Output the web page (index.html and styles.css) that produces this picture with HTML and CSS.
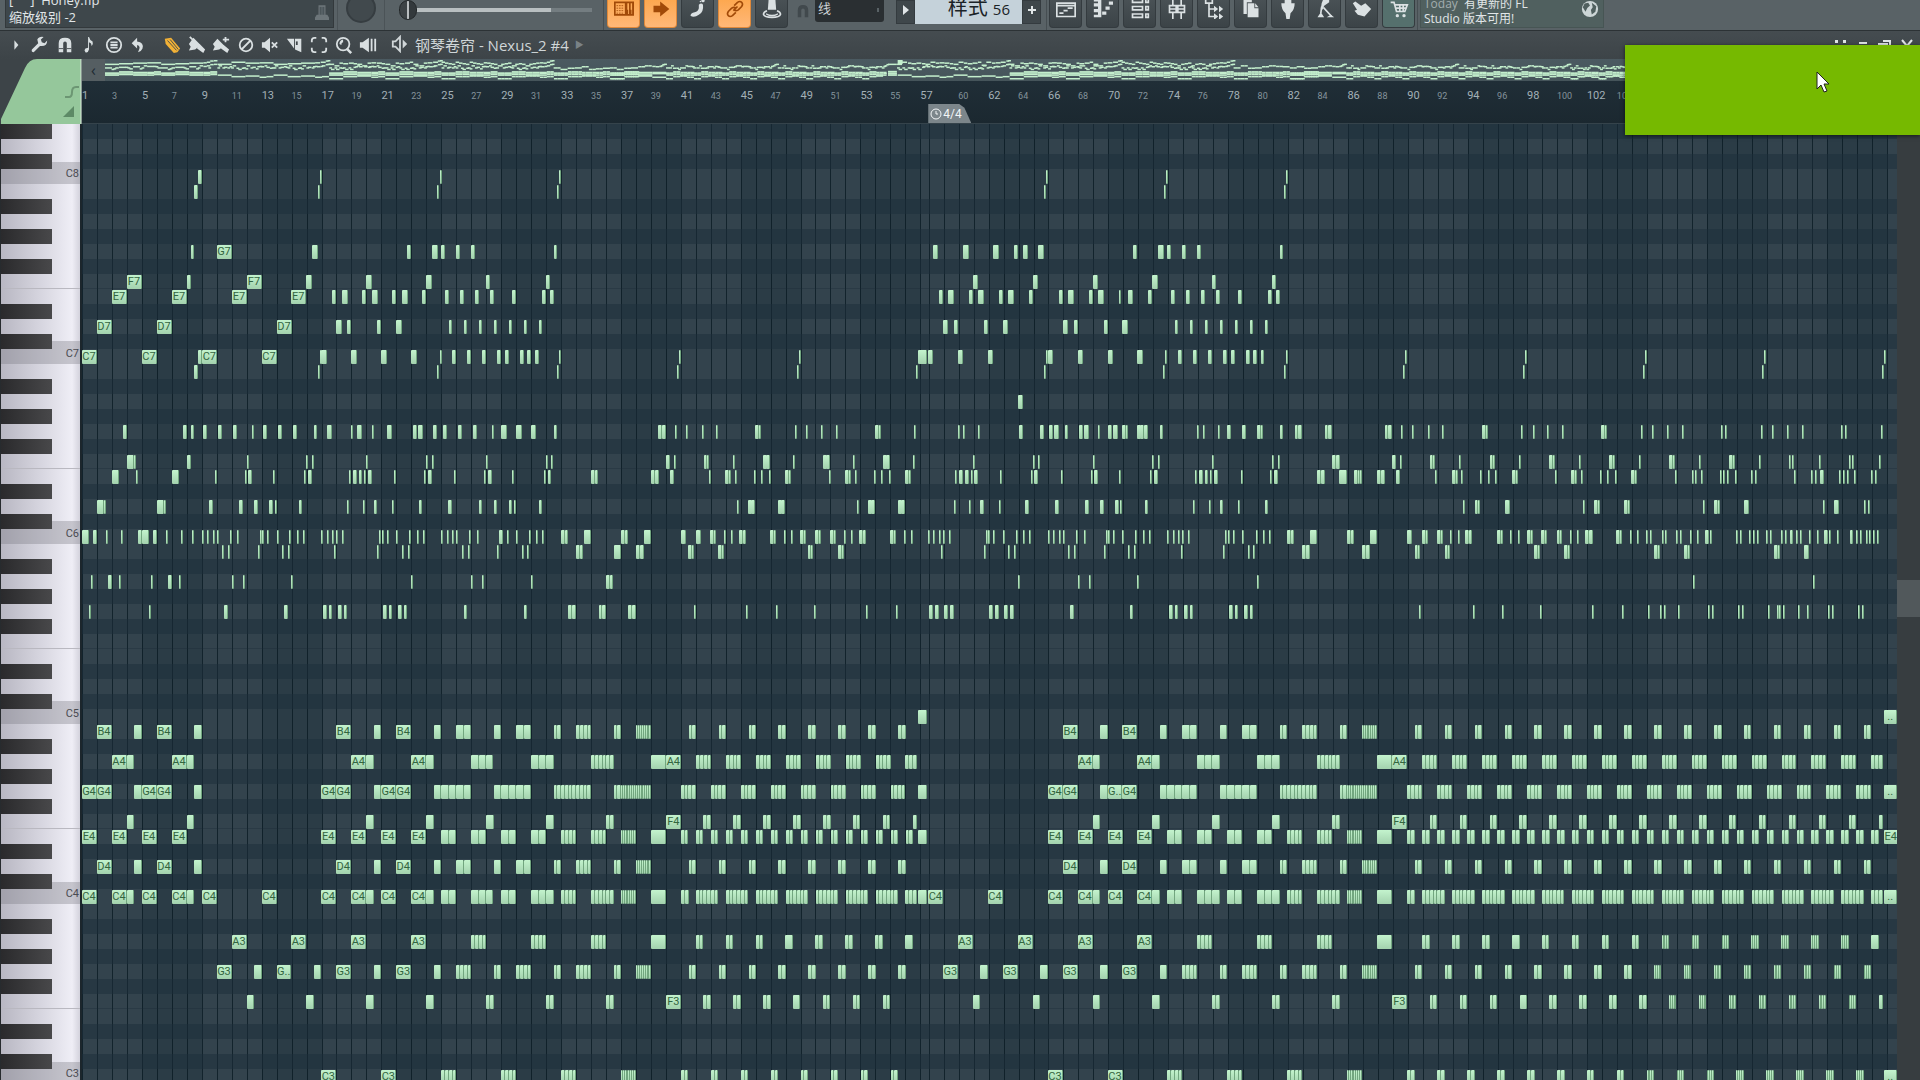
FILE: index.html
```html
<!DOCTYPE html>
<html lang="zh-CN">
<head>
    <meta charset="UTF-8">
    <meta content="width=device-width, initial-scale=1.0" name="viewport">
    <title>钢琴卷帘 - Nexus_2 #4</title>
    <link rel="stylesheet" href="styles.css">
</head>
<body>
<header class="topbar">
    <div class="hint">
        <div class="hint-text">
            <div class="hint-file">[ &nbsp; &nbsp; ] &nbsp;Honey.flp</div>
            <div>缩放级别 -2</div>
        </div>
        <svg class="hint-icon" viewBox="0 0 16 20"><path d="M4 1h8v11h2l2 3v3H0v-3l2-3h2z"/><path d="M6 3v9M8 3v9M10 3v9" stroke="#3d474b"/></svg>
    </div>
    <div class="knob-box"><div class="knob"></div></div>
    <input aria-label="Main volume" class="volume" max="100" min="0" type="range" value="0">
    <div class="group modes">
        <button aria-label="Typing keyboard" class="tile on" type="button"><svg viewBox="0 0 24 24"><path class="line" d="M1 4h22v15H1z"/><path d="M3 8h9M3 11h9M3 14h9M3 17h9" stroke="currentColor" stroke-dasharray="2 1"/><path d="M13 4h3v9h1v6h-4zM18 4h2v9h1v6h-3v-6zM22 4h1v15h-1z"/></svg></button>
        <button aria-label="Auto scroll" class="tile on" type="button"><svg viewBox="0 0 24 24"><path d="M3 8h8V3l11 9-11 9v-5H3z"/></svg></button>
        <button aria-label="Step edit" class="tile" type="button"><svg viewBox="0 0 24 24"><path d="M3 20q0-3 5-4 4-1 5-5V7q3-3 5 0 1 9-5 12-6 4-10 1z"/><circle cx="15" cy="3" r="1"/><circle cx="18" cy="2" r="2"/></svg></button>
        <button aria-label="Link notes" class="tile on" type="button"><svg viewBox="0 0 24 24"><path class="line" d="M10 14l5-5M11 8l4-4q3-2 5 0t0 5l-4 4q-3 2-5 0M13 16l-4 4q-3 2-5 0t0-5l4-4q3-2 5 0"/></svg></button>
        <button aria-label="Metronome" class="tile" type="button"><svg viewBox="0 0 24 24"><path d="M8 0h8l1 13H7z"/><path class="line" d="M6 14q-5 2-4 5t10 3 10-3-4-5"/><path d="M5 17q7 4 14 0v2q-7 4-14 0z"/></svg></button>
    </div>
    <svg class="snap-icon" viewBox="0 0 16 16"><path d="M2 15V7q0-6 6-6t6 6v8h-4V7q0-2-2-2T6 7v8z"/></svg>
    <select aria-label="Snap" class="snap"><option>线</option></select>
    <div class="pattern">
        <button aria-label="Pattern menu" class="pattern-side" type="button"><svg viewBox="0 0 8 10"><path d="M1 0l6 5-6 5z"/></svg></button>
        <button class="pattern-name" type="button">样式 <span>56</span></button>
        <button aria-label="New pattern" class="pattern-side" type="button"><svg viewBox="0 0 8 10"><path d="M3 1h2v3h3v2H5v3H3V6H0V4h3z"/></svg></button>
    </div>
    <div class="group windows">
        <button aria-label="Playlist" class="tile" type="button"><svg viewBox="0 0 24 24"><path class="line" d="M1 5h22v16H1zM1 8h22M4 17h5M9 14h5M14 11h6"/></svg></button>
        <button aria-label="Piano roll" class="tile" type="button"><svg viewBox="0 0 24 24"><path d="M1 0h9v22H1v-3h5v-3H1v-4h5V9H1V5h5V3H1zM11 15h5v4h-5zM15 9h5v4h-5zM19 3h5v4h-5z"/></svg></button>
        <button aria-label="Channel rack" class="tile" type="button"><svg viewBox="0 0 24 24"><path class="line" d="M3 0h12v4H3zM3 9h12v4H3zM3 18h12v4H3zM19 0h3v4h-3zM19 9h3v4h-3zM19 18h3v4h-3z"/></svg></button>
        <button aria-label="Mixer" class="tile" type="button"><svg viewBox="0 0 24 24"><path class="line" d="M7 0v8M7 16v8M17 0v8M17 16v8M3 8h8v8H3zM13 8h8v8h-8zM3 12h8M13 12h8"/></svg></button>
        <button aria-label="Browser" class="tile" type="button"><svg viewBox="0 0 24 24"><path class="line" d="M2 0h8v5H2zM6 5v16h8M6 12h8"/><path d="M12 8l5 4-5 4zM18 8l5 4-5 4zM12 17l5 4-5 4zM18 17l5 4-5 4z"/></svg></button>
        <button aria-label="Project picker" class="tile" type="button"><svg viewBox="0 0 24 24"><path d="M3 0h10v4H7v14H3z"/><path d="M8 5h8v6h5v11H8z"/><path d="M17 5l4 5h-4z"/></svg></button>
        <button aria-label="Plugins" class="tile" type="button"><svg viewBox="0 0 24 24"><path d="M8 0h8v5h4q0 8-5 12l-1 7h-4l-1-7Q4 13 4 5h4z"/></svg></button>
        <button aria-label="Tempo tapper" class="tile" type="button"><svg viewBox="0 0 24 24"><path d="M10 0h7v4l-6 4-2 5-2-1 1-7z"/><path class="line" d="M8 9l-1 8M10 10l10 11"/><path d="M3 22l4-6 4 6zM14 22l5-3 4 3z"/></svg></button>
        <button aria-label="Touch" class="tile" type="button"><svg viewBox="0 0 24 24"><path d="M1 5l3-2 7 5 5-3 7 7-8 9-8-2-4-5 3-1z"/></svg></button>
        <button aria-label="Shop" class="tile shop" type="button"><svg viewBox="0 0 24 24"><path class="line" d="M2 4h4l3 11h10l3-8H7M8 11h12M13 7v8M17 7v8"/><circle cx="10" cy="20" r="2"/><circle cx="18" cy="20" r="2"/></svg></button>
    </div>
    <div class="news">
        <div class="news-text"><span class="muted">Today</span> &nbsp;有更新的 FL<br>Studio 版本可用!</div>
        <svg class="globe" viewBox="0 0 20 20"><circle cx="10" cy="10" r="9"/><path d="M4 4l4-1 2 3-3 3-2 4-3-5zM12 3l5 4-1 6-4 3-1-5 2-3z"/></svg>
    </div>
</header>

<div class="toolbar">
    <button aria-label="Menu" class="tool narrow" type="button"><svg viewBox="0 0 20 20"><path d="M8 4l5 6-5 6z"/></svg></button>
    <div class="tools main-tools">
        <button aria-label="Options" class="tool" type="button"><svg viewBox="0 0 20 20"><path d="M18 5l-3 3-3-1-1-3 3-3q-5-1-7 3l1 4-7 7q-1 3 2 3l7-7q8 1 8-6z"/></svg></button>
        <button aria-label="Snap" class="tool" type="button"><svg viewBox="0 0 20 20"><path d="M3 18V8q0-6 7-6t7 6v10h-5V8q0-2-2-2T8 8v10z"/><path d="M3 14h5M12 14h5" stroke="#41484c"/></svg></button>
        <button aria-label="Stamp" class="tool" type="button"><svg viewBox="0 0 20 20"><path d="M10 1q1 4 4 5 1 3-1 5 0-3-3-4v8q-1 4-4 3-2-2 0-4l3-1V1z"/></svg></button>
        <button aria-label="View" class="tool" type="button"><svg viewBox="0 0 20 20"><circle class="line" cx="10" cy="10" r="8"/><path class="line" d="M6 7h8M6 10h8M6 13h8"/></svg></button>
        <button aria-label="Undo" class="tool" type="button"><svg viewBox="0 0 20 20"><path d="M9 2v4q8 1 6 8-1 3-5 4 4-7-1-8v4L3 8z"/></svg></button>
    </div>
    <div class="tools edit-tools">
        <button aria-label="Draw" class="tool active" type="button"><svg viewBox="0 0 20 20"><path d="M2 3l7-1 10 12-3 4-4 1L3 9z"/><path d="M5 5l10 11M8 4l9 11" stroke="#41484c"/></svg></button>
        <button aria-label="Paint" class="tool" type="button"><svg viewBox="0 0 20 20"><path d="M6 2l8 8-6 5-7 1 2-4-2-3zM13 9l6 6-2 4-7-5z"/><path d="M2 1l5 5" class="line"/></svg></button>
        <button aria-label="Paint sequence" class="tool" type="button"><svg viewBox="0 0 20 20"><path d="M6 3l8 8-6 4-7 1 2-4-2-3zM13 10l6 5-2 4-7-5z"/><path class="line" d="M12 4h7M15 1v6"/></svg></button>
        <button aria-label="Delete" class="tool" type="button"><svg viewBox="0 0 20 20"><circle class="line" cx="10" cy="10" r="7"/><path class="line" d="M15 5L5 15"/></svg></button>
        <button aria-label="Mute" class="tool" type="button"><svg viewBox="0 0 20 20"><path d="M1 7h3l6-5v16l-6-5H1z"/><path class="line" d="M12 7l6 6M18 7l-6 6"/></svg></button>
        <button aria-label="Slice" class="tool" type="button"><svg viewBox="0 0 20 20"><path d="M1 3h8v11zM10 3h7v15l-7-3z"/><path d="M12 6v4" stroke="#41484c" stroke-width="2"/></svg></button>
        <button aria-label="Select" class="tool" type="button"><svg viewBox="0 0 20 20"><path class="line" d="M2 7V5q0-3 3-3h2M13 2h2q3 0 3 3v2M18 13v2q0 3-3 3h-2M7 18H5q-3 0-3-3v-2"/></svg></button>
        <button aria-label="Zoom" class="tool" type="button"><svg viewBox="0 0 20 20"><circle class="line" cx="9" cy="9" r="7"/><path d="M14 13l5 5-2 2-5-5zM5 9q0-4 4-5v3q-2 0-2 3z"/></svg></button>
        <button aria-label="Playback" class="tool" type="button"><svg viewBox="0 0 20 20"><path d="M1 7h3l7-5v16l-7-5H1zM13 3h2v14h-2zM17 3h2v14h-2z"/></svg></button>
    </div>
    <button class="title" type="button">
        <svg viewBox="0 0 20 20"><path class="line" d="M2 7h3l5-5v16l-5-5H2z"/><path d="M13 5l5 5-5 5z"/></svg>
        <span>钢琴卷帘 - Nexus_2 #4</span>
        <i>&#9654;</i>
    </button>
    <div class="window-buttons">
        <button aria-label="Detach" class="win" type="button"><svg viewBox="0 0 16 16"><path d="M2 3h3v3H2zM10 3h3v3h-3z"/></svg></button>
        <button aria-label="Minimise" class="win" type="button"><svg viewBox="0 0 16 16"><path d="M4 5h8v2H4z"/></svg></button>
        <button aria-label="Restore" class="win" type="button"><svg viewBox="0 0 16 16"><path class="line" d="M6 4h7v5M2 7h8v7H2z"/></svg></button>
        <button aria-label="Close" class="win" type="button"><svg viewBox="0 0 16 16"><path class="line" d="M3 3l10 12M13 3L3 15"/></svg></button>
    </div>
</div>

<main class="editor">
    <svg class="corner" viewBox="0 0 82 65" preserveAspectRatio="none">
        <path d="M1 65v-5L25 9q4-9 12-9h44v65z" fill="#95c79b"/>
        <path d="M65 38h4q3 0 3-5t4-5h3" fill="none" stroke="#6c9673" stroke-width="2"/>
        <path d="M63 58l11-11v11z" fill="#5d8a66"/>
        <path d="M81 0v65" stroke="#d8eadb"/>
    </svg>
    <div class="timeline">
        <div class="overview">
            <button aria-label="Scroll left" class="overview-left" type="button">&#8249;</button>
            <svg class="minimap" id="minimap" preserveAspectRatio="none" viewBox="0 0 5740 22"></svg>
        </div>
        <div class="ruler" id="ruler"></div>
    </div>
    <div class="keys" id="keys"></div>
    <div class="roll">
        <div class="bars" id="bars"></div>
        <div id="rows"></div>
    </div>
    <div class="scrollbar"><div class="scroll-thumb"></div></div>
</main>

<aside class="overlay">
    <svg class="pointer" viewBox="0 0 14 22"><path d="M1 1v17l4-4 3 7 3-1-3-7h5z" fill="#fff" stroke="#222"/></svg>
</aside>

<script src="roll.js"></script>
</body>
</html>
```
FILE: styles.css
```css
* {
    box-sizing: border-box;
}

body {
    margin: 0;
    height: 100vh;
    overflow: hidden;
    display: flex;
    flex-direction: column;
    background: #3d4448;
    color: #e1e6e8;
    font-family: "Open Sans", "Noto Sans CJK SC", sans-serif;
    font-size: 13px;
}

button,
select {
    font: inherit;
    color: inherit;
    border: 0;
    padding: 0;
    background: none;
}

svg {
    fill: currentColor;
}

svg .line {
    fill: none;
    stroke: currentColor;
    stroke-width: 2;
}

/* Top bar */
.topbar {
    display: flex;
    align-items: flex-start;
    flex: none;
    height: 31px;
    overflow: hidden;
    padding-left: 5px;
    background: #596266;
    border-bottom: 1px solid #2c3235;
}

.hint {
    display: flex;
    justify-content: space-between;
    align-items: flex-end;
    width: 329px;
    height: 28px;
    padding: 0 4px 1px 3px;
    background: #3e474b;
    border: 1px solid #33393c;
    border-top: 0;
}

.hint-text {
    line-height: 17px;
}

.hint-icon {
    width: 14px;
    height: 18px;
    margin-bottom: 4px;
    color: #6c7579;
}

.knob-box {
    width: 48px;
    height: 31px;
    margin-left: 3px;
    border-left: 1px solid #4b5357;
    border-right: 1px solid #4b5357;
}

.knob {
    width: 30px;
    height: 30px;
    margin: -7px auto 0;
    border-radius: 50%;
    background: #41494d;
    border: 2px solid #363d41;
}

.volume {
    appearance: none;
    width: 193px;
    height: 20px;
    margin: 0 0 0 14px;
    background: linear-gradient(90deg, #b9bfc1 79%, #747d81 79%) center / 100% 4px no-repeat;
}

.volume::-webkit-slider-thumb {
    appearance: none;
    width: 18px;
    height: 20px;
    border-radius: 9px;
    border: 1px solid #23282a;
    background: linear-gradient(90deg, #3d4346 44%, #b9bec0 44%, #b9bec0 54%, #33393c 54%);
}

.group {
    display: flex;
    gap: 4px;
    height: 31px;
    border-left: 1px solid #464e52;
}

.modes {
    margin-left: 11px;
    padding-left: 3px;
}

.tile {
    display: flex;
    justify-content: center;
    align-items: center;
    flex: none;
    width: 33px;
    height: 28px;
    padding-bottom: 9px;
    color: #dbe1e3;
    background: linear-gradient(#495155, #3b4347);
    border: 1px solid #343b3f;
    border-top: 0;
    border-radius: 0 0 4px 4px;
}

.tile svg {
    flex: none;
    width: 22px;
    height: 20px;
}

.tile.on {
    color: #a14a08;
    background: linear-gradient(#fda850, #ffb878);
    border-color: #e0893a;
}

.tile.shop {
    background: #55706d;
}

.snap-icon {
    width: 14px;
    height: 16px;
    margin: 3px 5px 0 8px;
    color: #41494d;
}

.snap {
    appearance: none;
    width: 69px;
    height: 22px;
    padding: 0 3px 6px;
    color: #cdd3d5;
    line-height: 16px;
    background: #2a2f32 linear-gradient(#596266, #596266) 62px 8px / 2px 4px no-repeat;
    border-radius: 0 0 3px 3px;
}

.pattern {
    display: flex;
    height: 24px;
    margin: 0 5px 0 12px;
}

.pattern-side {
    width: 19px;
    padding-bottom: 4px;
    background: #3f474b;
    border: 1px solid #343b3f;
}

.pattern-side svg {
    width: 8px;
    height: 10px;
}

.pattern-name {
    width: 107px;
    padding: 0 12px 8px 0;
    text-align: right;
    white-space: nowrap;
    font-size: 20px;
    line-height: 16px;
    color: #1b2327;
    background: #c5d2da;
}

.pattern-name span {
    font-size: 15px;
}

.windows {
    padding: 0 2px;
    border-right: 1px solid #464e52;
}

.news {
    display: flex;
    justify-content: space-between;
    width: 184px;
    height: 28px;
    margin-left: 2px;
    padding: 0 3px;
    background: #50605f;
    border: 1px solid #475554;
    border-top: 0;
    font-size: 12px;
}

.news-text {
    margin-top: -4px;
    line-height: 15px;
}

.muted {
    color: #a3adae;
}

.globe {
    width: 20px;
    height: 18px;
    fill: #50605f;
}

.globe circle {
    fill: #cdd6d7;
}

/* Piano roll toolbar */
.toolbar {
    display: flex;
    align-items: center;
    flex: none;
    height: 28px;
    background: linear-gradient(#454c50, #3d4448);
}

.tool {
    display: flex;
    justify-content: center;
    align-items: center;
    width: 24px;
    height: 24px;
    color: #d9dfe1;
}

.tool svg {
    width: 18px;
    height: 18px;
}

.tool.narrow {
    width: 16px;
    margin-left: 8px;
}

.tool.active {
    color: #f2b136;
}

.tools {
    display: flex;
    justify-content: space-between;
}

.main-tools {
    width: 122px;
    margin-left: 4px;
}

.edit-tools {
    width: 220px;
    margin-left: 10px;
}

.title {
    display: flex;
    align-items: center;
    gap: 6px;
    margin-left: 11px;
    padding-bottom: 2px;
    font-size: 15px;
    color: #d0d6d8;
}

.title svg {
    width: 18px;
    height: 18px;
}

.title i {
    font-size: 9px;
    font-style: normal;
    color: #7a8286;
}

.window-buttons {
    display: flex;
    gap: 6px;
    margin-left: auto;
    padding-right: 5px;
}

.win svg {
    display: block;
    width: 16px;
    height: 16px;
}

/* Editor */
.editor {
    flex: 1;
    min-height: 0;
    display: grid;
    grid-template-columns: 82px 1fr 23px;
    grid-template-rows: 65px 1fr;
    overflow: hidden;
}

.corner {
    width: 82px;
    height: 65px;
}

.timeline {
    grid-column: 2 / 4;
    background: #1d2a32;
}

.overview {
    display: flex;
    height: 22px;
    background: linear-gradient(#4b5a61, #45545a);
}

.overview-left {
    width: 23px;
    background: #555e62;
    color: #1d2a32;
    font-size: 16px;
    line-height: 16px;
}

.minimap {
    flex: 1;
    min-width: 0;
    height: 22px;
    margin-right: 23px;
}

.minimap rect {
    fill: #c4efcd;
}

.ruler,
.bars {
    display: flex;
}

.ruler {
    height: 43px;
    margin-right: 23px;
    background: linear-gradient(#202e37, #1b2830);
    border-bottom: 1px solid #35434b;
    overflow: hidden;
}

.tick {
    flex-basis: 0;
    min-width: 0;
    padding-top: 7px;
    color: #84939b;
    font: 9px/16px Roboto, sans-serif;
    white-space: nowrap;
}

.tick.major {
    color: #a3b0b7;
    font-size: 11px;
}

.marker {
    position: absolute;
    width: 43px;
    height: 19px;
    margin-top: 16px;
    padding-left: 2px;
    display: flex;
    align-items: center;
    gap: 1px;
    color: #f2f5f6;
    background: #7c868b;
    font: 12px Roboto, sans-serif;
    clip-path: polygon(0 0, 72% 0, 84% 20%, 100% 100%, 0 100%);
}

.marker svg {
    width: 12px;
    height: 12px;
}

.keys {
    overflow: hidden;
    background: linear-gradient(90deg, #b8b7c2, #d6d5df 50%, #efeef6 90%, #d3d2dc);
    border-left: 1px solid #272b2e;
    border-right: 2px solid #1c262c;
}

.key {
    height: 15px;
    padding-right: 1px;
    text-align: right;
    color: #4a4b52;
    font: 11px/10px Roboto, sans-serif;
}

.key.c {
    background: rgba(120, 120, 128, 0.35);
}

.key.c-sharp {
    background: linear-gradient(transparent 50%, rgba(120, 120, 128, 0.35) 50%);
}

.key.f {
    border-bottom: 1px solid #b9b8c0;
}

.key.sharp::before {
    content: "";
    display: block;
    width: 51px;
    height: 15px;
    background: linear-gradient(90deg, #2a2a2c, #48484a);
}

.roll {
    position: relative;
    overflow: hidden;
    background: #33434d;
}

.bars {
    position: absolute;
    inset: 0;
}

.bar {
    flex-basis: 0;
    min-width: 0;
    border-left: 1px solid rgba(8, 24, 34, 0.75);
}

.bar.odd {
    background: rgba(16, 34, 46, 0.2);
}

.row {
    position: relative;
    height: 15px;
}

.row.sharp {
    background: rgba(28, 46, 58, 0.5);
}

.row.f {
    border-bottom: 1px solid rgba(22, 40, 52, 0.3);
}

.note {
    position: absolute;
    top: 1px;
    height: 14px;
    overflow: hidden;
    background: linear-gradient(#c3f3cd, #a3d2ae);
    border-right: 1px solid #72a67f;
    border-radius: 1px;
    color: #33653f;
    font: 11px/14px Roboto, sans-serif;
    text-align: center;
    white-space: nowrap;
}

.scrollbar {
    background: #373d40;
    padding-top: 456px;
}

.scroll-thumb {
    height: 37px;
    background: #51585b;
}

/* Floating window over the right corner */
.overlay {
    position: absolute;
    top: 45px;
    right: 0;
    width: 295px;
    height: 90px;
    background: #76b900;
    box-shadow: 0 1px 4px rgba(0, 0, 0, 0.6);
}

.pointer {
    position: absolute;
    left: 191px;
    top: 26px;
    width: 14px;
    height: 22px;
}
```
FILE: roll.js
```js
const BAR = 44.9;            // ticks in one bar
const TOTAL = 5445;          // ticks visible in the roll
const FIRST_ROW = 99;        // D#8
const ROW_COUNT = 64;
const NAMES = ['C', 'C#', 'D', 'D#', 'E', 'F', 'F#', 'G', 'G#', 'A', 'A#', 'B'];

// note lengths in ticks
const LENGTHS = {a: 5.6, b: 11.2, c: 16, d: 22.4, e: BAR, f: BAR, g: 28.5, h: 38, i: 42};

// Each token: start, length letter, optional count of back to back notes,
// optional *n to repeat the figure every two bars
const CLIPS = [
    {
        start: -246,
        rows: {
            C8: '595b 959a 1319a',
            B7: '583b 953a 1312a',
            G7: '572b 651e 937c 1222b 1297c 1324b 1369b 1414b',
            F7: '381e 561b 741e 919c 1099c 1279c',
            E7: '336e 516e 696e 874e 997b 1027c 1087b 1117c 1177b 1207c 1267b 1335b 1380b 1425b',
            D7: '291e 471e 831e 1009c 1042b 1132b 1189c 1346b 1391b 1436b',
            C7: '246e 426e 595b 607e 786e 959a 964c 1054c 1144c 1234c 1319a 1357b 1402b',
            B6: '583b 953a 1312a',
            G6: '370b 549b 572b 610b 655b 700b 757a 790b 835b 879b 941b 981c 1054a 1070c 1116a 1161c 1240b 1253c 1300b 1330b 1375b 1420b',
            F6: '381d 402a 561b 741a 918a 936a 1099a 1278a 1296a',
            E6: '336d 408a 516d 645a 734a 745b 819a 912a 925b 1048a 1060b 1076b 1092a 1105b 1183a 1272a 1285b 1363a',
            D6: '291d 312a 471d 492a 627b 718b 763b 808b 825a 896b 1042a 1088a 1121b 1177a 1256b 1345b 1436b',
            C6: '246d 279b 318a 363a 414b 425d 459b 498a 543a 577a 606a 622a 638a 650a 689a 712a 780a 786a 802a 831a 868a 891a 908a 964a 981a 996a 1008a 1026a 1138a 1145a 1161a 1189a 1228a 1251a 1268a 1324a 1341a 1357a 1369a 1408a 1431a',
            B5: '667a 684a 774a 847a 864a 1003a 1132a 1206a 1223a 1386a 1403a',
            A5: '273a 324b 357a 453a 504b 538a 696a 729a 874a 1234a 1414a',
            G5: '267a 447a 673b 852b 970b 986b 1015b 1031b 1150b 1166b 1195b 1211b 1391b',
            B4: '291e 403d 471e 583d 1009e 1121d 1189e 1301d 1369d2',
            A4: '336e 381d 516e 561d 1054e 1099d 1234e 1279d 1414d2',
            G4: '246e 291e 403d 426e 471e 583d 964e 1009e 1121d 1144e 1189e 1301d5',
            F4: '381d 561d 1099d 1279d',
            E4: '246e 336e 426e 516e 964e 1054e 1144e 1234e 1324d2 1414d2',
            D4: '291e 403d 471e 583d 1009e 1121d 1189e 1301d 1369d2',
            C4: '246e 336e 381d 426e 516e 561d 607e 786e 964e 1054e 1099d 1144e 1234e 1279d 1324d2 1414d2',
            A3: '696e 874e 1054e 1234e 1414b4',
            G3: '651e 763d 831i 941d 1009e 1121d 1189e 1301d 1369b4',
            F3: '741d 919d 1099d 1279d',
            C3: '964e 1144e 1324b4'
        }
    },
    {
        start: 1194,
        rows: {
            C8: '237a',
            B7: '231a',
            G7: '221b 1359c',
            F7: '19b 199b',
            E7: '30b 97b 187b 210b 1378b 1405c',
            D7: '41b 86b 131b 176b 1389c 1423b',
            C7: '7b 52b 75b 120b 142b 165b 237a 597a 956a 1314g 1343c',
            B6: '231a 591a 950a 1309a',
            G6: '36a 64c 109c 153c 221b 535b2 586a 619a 665a 709a 826b 837a 945a 979a 1024a 1069a 1186b 1197a 1303a',
            F6: '19a 197a 214a 559b 581a 671b 681a 759a 849b 859b 939a 1029b 1038b 1119a 1209b 1218b 1299a',
            E6: '13a 25b 97a 192a 203b 333b2 514b2 570b 686a 736b 747a 766a 821a 844a 867a 916b 927a 1047a 1096b 1107a 1126a 1182a 1204a 1227a 1276b 1287a 1426a',
            D6: '41b 86b 103a 176b 770a 804b 813b 894b 903b 1131a 1164b 1173b 1254b 1263b 1423a',
            C6: '57b 80a 108a 147a 169a 187a 243b2 311d 423b2 491d 603b 613a 648b 658a 690b 702a 732a 754a 777b2 871b 883a 912a 934a 961b 973a 1006b 1018a 1051b 1063a 1092a 1114a 1137b2 1231b 1243a 1272a 1294a 1343a 1360a 1377a 1389a 1406a',
            B5: '51a 125a 142a 288b2 401d 469b2 625b 636a 714b 725a 983b 994a 1074b 1085a 1383a',
            A5: '7a 153a 378b2',
            G5: '131b 265b2 356b2 445b2 642a 798a 889a 1002a 1159a 1249a 1348b 1366b 1393b 1411b',
            C5: '1314g',
            B4: '41d 109d2 221b2 289b4 401b2 469a8 626b2*8',
            A4: '18d 154d3 334b6 514f 559e 649b4*7 1276b3',
            G4: '41d5 221b10 401b2 423a16 603b4*8 1314g',
            F4: '19d 199d 379b2 559e 670b2*7 1299b',
            E4: '64d2 154d2 244b4 334b4 423a8 514f 603b2*8 648b2*8 1314g',
            D4: '41d 109d2 221b2 289b4 401b2 469a8 626b2*8',
            C4: '18d 64d2 154d3 244b4 334b6 423a8 514f 604b2 648b6*7 1276b3 1314g 1345e',
            A3: '154b4 334b4 514f 648b2*3 916d 1006b2*3 1276d',
            G3: '41b2 109b4 221b2 289b4 401b2 469a8 626b2*8 1390e',
            F3: '19b2 199b2 379b2 559e 670b2*3 939d 1029b2*3',
            C3: '64b4 244b4 423a8 603b2*8'
        }
    },
    {
        start: 2574,
        rows: {
            C8: '319a 677a 1038a',
            B7: '313a 671a 1031a',
            G7: '70c 160c 222b 249c 295c 580b 655c 682b 727b 772b 1019b',
            F7: '99c 279c 459c 637c 817b 997b',
            E7: '87b 115c 177b 205c 267b 358b 385c 448b 475c 538a 564c 625b 693b 738b 783b 828b 895b 985b 1008b',
            D7: '132b 189c 369c 402b 493b 547c 704b 749b 794b 839b 884b 929b 974b',
            C7: '54c 144c 317a 323c 414c 504c 592c 676a 715b 760b 805b 850b 873b 918b 940b 962b 1037a 1395a',
            B6: '312a 670a 1031a 1389a',
            A6: '234c',
            G6: '54a 70a 115a 238b 301b 328b 341c 374b 417b 431c 475a 505b 519c 547b 557a 592b 601b 612b 659b 771a 789a 835a 861b 906b 952b 962a 1019b 1064b2 1154b2 1334b2 1384a 1417a',
            F6: '98a 279a 295a 459a 637a 654a 817a 997a 1014a 1177b2 1357b 1379a',
            E6: '58b 75b 92a 103b 181a 272a 283b 362a 452a 463b 537a 631a 643b 766a 778b 794b 811a 823b 902a 991a 1003b 1132b2 1198d 1243b 1254a2 1312b2 1368b',
            D6: '87a 121b 177a 256b 346b 436b 481b 526b 541a 614b 760a 806a 839b 895a 974b',
            C6: '137a 143a 160a 189a 228a 250a 267a 323a 340a 357a 368a 407a 431a 497a 504a 520a 547a 586a 609a 626a 682a 699a 714a 727a 744a 856a 863a 879a 907a 947a 969a 986a 1041b2 1109d 1221b2 1289d 1402b 1411a',
            B5: '132a 205a 222a 385a 402a 492a 564a 581a 722a 850a 924a 940a 1087b2 1267b2 1424b 1434a',
            A5: '233a 413a 447a 592a 952a',
            G5: '148b 166b 193b 211b 391b 569b 688b 704b 733b 749b 868b 884b 913b 929b 1438a',
            B4: '369e 481d 547e 659d 727d2 839d 907d2 1019b2 1087b4 1199b2 1266a8 1424b2',
            A4: '414e 459d 592e 637d 772d3 952d3 1132b6 1311f 1357e',
            G4: '324e 369e 481d 504i 547e 659d5 839d5 1019b10 1199b2 1221a16 1402b4',
            F4: '459d 637d 817d 997d 1177b2 1357e',
            E4: '324e 414e 504e 592e 682d2 772d2 862d2 952d2 1042b4 1132b4 1221a8 1311f 1402b2',
            D4: '369e 481d 547e 659d 727d2 839d 907d2 1019b2 1087b4 1199b2 1266a8 1424b2',
            C4: '144e 324e 414e 459d 504e 592e 637d 682d2 772d3 862d2 952d3 1042b4 1132b6 1221a8 1311f 1402b2',
            A3: '54e 234e 414e 592e 772b4 952b4 1132b4 1311f',
            G3: '121d 189e 301d 369e 481d 547e 659d 727b4 839b2 907b4 1019b2 1087b4 1199b2 1266a8 1424b2',
            F3: '99d 279d 459d 637d 817b2 997b2 1177b2 1357e',
            C3: '324e 504e 682b4 862b4 1042b4 1221a8 1402b2'
        }
    },
    {
        start: 3954,
        rows: {
            C7: '375a 734a 1092a 1452a',
            B6: '370a 728a 1087a 1447a',
            G6: '83a 127a 247b 257a 364a 398a 442a 487a 604b 615a 724a 757a 802a 847a 964a 976a 1082a 1116a 1161a 1206a 1324a 1336a 1442a',
            F6: '89b 98a 178a 269b 278a 358a 447b 458a 538a 627b 638a 717a 807b 818a 897a 987b 998a 1077a 1167a 1177a 1257a 1347a 1357a 1437a',
            E6: '105a 157b 167a 183a 240a 263a 286a 337b 347a 464a 514b 525a 543a 600a 622a 645a 694b 706a 824a 875a 886a 904a 960a 970a 982a 1005a 1054a 1066a 1183a 1233a 1245a 1260b 1318a 1329a 1341a 1363a 1413a 1426a',
            D6: '190a 224b 234a 315b 325a 548a 583b 593a 673b 683a 908a 942b 953a 1032b 1042a 1268a 1302b 1312a 1392a 1403a',
            C6: '67b 77a 112b 122a 150a 173a 195b2 291b 302a 331a 353a 382b 392a 424b 434a 470b 481a 510a 532a 556b2 649b 660a 690a 712a 739a 751a 785a 796a 829a 841a 870a 892a 915b 931a 1009a 1021a 1048a 1060a 1072a 1098a 1110a 1143a 1155a 1169b 1189a 1201a 1228a 1251a 1273b 1288a 1312a 1349b 1369a 1381a 1398a 1408a 1419a 1431a',
            B5: '134b 145a 403b 414a 492b 504a 762b 773a 852b 864a 1122b 1133a 1212b 1222a',
            A5: '879a 1239a',
            G5: '218a 307a 419a 577a 667a 745a 780a 791a 835a 925a 937a 1015a 1026a 1104a 1131a 1138a 1150a 1194a 1221a 1284a 1297a 1374a 1386a',
            C5: '1453h',
            B4: '134b2*15',
            A4: '67b4*15 1414b3',
            G4: '112b4*15 1453h',
            F4: '89b2*15 1437b',
            E4: '67b2*16 112b2*15 1453i',
            D4: '134b2*15',
            C4: '67b6*15 1414b3 1453h',
            A3: '67b2*3 337d 426b2*4 785a4*7 1414d',
            G3: '134b2*7 762a4*8',
            F3: '89b2*3 359d 448b2*4 807a4*7 1437b',
            C3: '112b2*7 740a4*8 1453h'
        }
    }
];

function pitchOf(name) {
    return NAMES.indexOf(name.slice(0, -1)) + Number(name.slice(-1)) * 12;
}

function noteLabel(name, kind) {
    if (kind === 'e') return name;
    if (kind === 'h') return '..';
    if (kind === 'i') return name === 'E4' ? name : name[0] + '..';
    return '';
}

// Expand the clips into a flat list of notes
const notes = [];
CLIPS.forEach(clip => {
    Object.entries(clip.rows).forEach(([name, text]) => {
        text.split(' ').forEach(token => {
            const [, at, kind, count, repeat] = token.match(/(\d+)([a-i])(\d*)(?:\*(\d+))?/);
            for (let r = 0; r < Number(repeat || 1); r++) {
                for (let i = 0; i < Number(count || 1); i++) {
                    const start = clip.start + Number(at) + r * BAR * 2 + i * LENGTHS[kind];
                    notes.push({name, start, length: LENGTHS[kind], label: noteLabel(name, kind)});
                }
            }
        });
    });
});

// Rows and keys
const keys = document.getElementById('keys');
const rows = document.getElementById('rows');
const rowByPitch = {};
for (let i = 0; i < ROW_COUNT; i++) {
    const pitch = FIRST_ROW - i;
    const name = NAMES[pitch % 12];
    const kind = (name.includes('#') ? ' sharp' : '') + (name === 'F' ? ' f' : '');

    const key = document.createElement('div');
    key.className = 'key' + kind + (name === 'C' ? ' c' : '') + (name === 'C#' ? ' c-sharp' : '');
    if (name === 'C') key.textContent = 'C' + Math.floor(pitch / 12);
    keys.appendChild(key);

    const row = document.createElement('div');
    row.className = 'row' + kind;
    rows.appendChild(row);
    rowByPitch[pitch] = row;
}

// Notes in the roll and in the overview
const minimap = document.getElementById('minimap');
function addRect(x, y, width, height) {
    const rect = document.createElementNS('http://www.w3.org/2000/svg', 'rect');
    rect.setAttribute('x', x);
    rect.setAttribute('y', y);
    rect.setAttribute('width', width);
    rect.setAttribute('height', height);
    minimap.appendChild(rect);
}

notes.forEach(note => {
    const pitch = pitchOf(note.name);
    const div = document.createElement('div');
    div.className = 'note';
    div.style.left = note.start / TOTAL * 100 + '%';
    div.style.width = note.length / TOTAL * 100 + '%';
    div.textContent = note.label;
    rowByPitch[pitch].appendChild(div);
    addRect(note.start, 1 + (96 - pitch) * 0.3, Math.max(note.length, 9), 1.5);
});
addRect(2539, 1, 16, 4);

// Bars: number 57 is a short one, the 4/4 marker sits right after it
const bars = document.getElementById('bars');
const ruler = document.getElementById('ruler');
for (let n = 1; n <= 122; n++) {
    const size = n === 57 ? 0.535 : n === 122 ? 0.71 : 1;
    const shifted = n > 57 ? n - 1 : n;

    const bar = document.createElement('div');
    bar.className = Math.floor((shifted - 1) / 4) % 2 ? 'bar odd' : 'bar';
    bar.style.flexGrow = size;
    bars.appendChild(bar);

    const tick = document.createElement('div');
    tick.className = shifted % 4 === 1 && n !== 58 ? 'tick major' : 'tick';
    tick.style.flexGrow = size;
    if (shifted % 2 === 1 && n !== 58) tick.textContent = n;
    if (n === 58) {
        tick.innerHTML = '<div class="marker"><svg viewBox="0 0 12 12"><circle cx="6" cy="6" r="5" fill="none" stroke="currentColor"/><path d="M6 3v3h2" fill="none" stroke="currentColor"/></svg>4/4</div>';
    }
    ruler.appendChild(tick);
}
```
